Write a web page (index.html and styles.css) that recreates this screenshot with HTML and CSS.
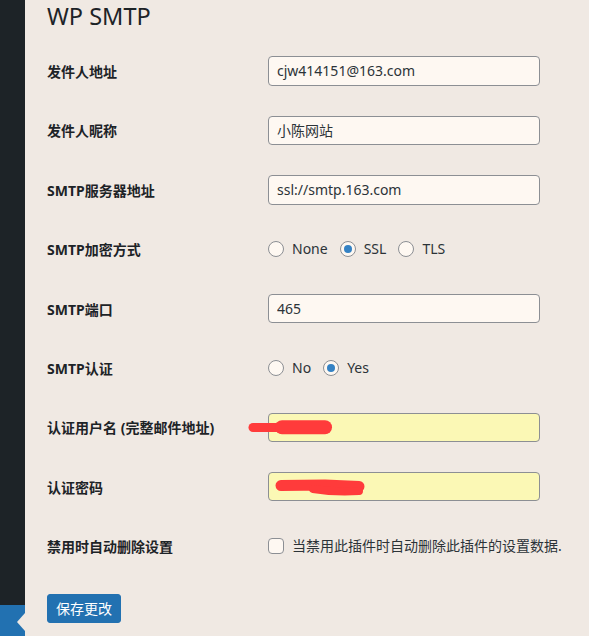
FILE: index.html
```html
<!DOCTYPE html>
<html lang="zh-CN">
<head>
  <meta charset="UTF-8">
  <title>WP SMTP</title>
  <link rel="stylesheet" href="styles.css">
</head>
<body>
  <div class="layout">
    <div class="sidebar">
      <div class="menu-current"></div>
    </div>

    <div class="wrap">
      <h1 class="page-title">WP SMTP</h1>

      <form class="form-table">
        <div class="row">
          <label class="th">发件人地址</label>
          <div class="td"><input class="regular-text" type="text" value="cjw414151@163.com"></div>
        </div>
        <div class="row">
          <label class="th">发件人昵称</label>
          <div class="td"><input class="regular-text" type="text" value="小陈网站"></div>
        </div>
        <div class="row">
          <label class="th">SMTP服务器地址</label>
          <div class="td"><input class="regular-text" type="text" value="ssl://smtp.163.com"></div>
        </div>
        <div class="row">
          <label class="th">SMTP加密方式</label>
          <div class="td choices">
            <label class="choice"><input type="radio" name="secure"> None</label>
            <label class="choice"><input type="radio" name="secure" checked> SSL</label>
            <label class="choice"><input type="radio" name="secure"> TLS</label>
          </div>
        </div>
        <div class="row">
          <label class="th">SMTP端口</label>
          <div class="td"><input class="regular-text" type="text" value="465"></div>
        </div>
        <div class="row">
          <label class="th">SMTP认证</label>
          <div class="td choices">
            <label class="choice"><input type="radio" name="auth"> No</label>
            <label class="choice"><input type="radio" name="auth" checked> Yes</label>
          </div>
        </div>
        <div class="row">
          <label class="th">认证用户名 (完整邮件地址)</label>
          <div class="td masked">
            <input class="regular-text autofill" type="text" value="">
            <svg class="scribble scribble-user" width="86" height="16" viewBox="0 0 86 16">
              <line x1="5" y1="7.5" x2="30" y2="7.5" stroke="#ff3b3b" stroke-width="9" stroke-linecap="round"/>
              <line x1="34" y1="7.3" x2="77" y2="7.3" stroke="#ff3b3b" stroke-width="14" stroke-linecap="round"/>
            </svg>
          </div>
        </div>
        <div class="row">
          <label class="th">认证密码</label>
          <div class="td masked">
            <input class="regular-text autofill" type="password" value="">
            <svg class="scribble scribble-pass" width="92" height="19" viewBox="0 0 92 19">
              <path d="M6 6.5 L50 6 L84 7.5" fill="none" stroke="#ff3b3b" stroke-width="11" stroke-linecap="round" stroke-linejoin="round"/>
              <path d="M38 10 Q60 13.5 84 12" fill="none" stroke="#ff3b3b" stroke-width="8" stroke-linecap="round"/>
            </svg>
          </div>
        </div>
        <div class="row">
          <label class="th">禁用时自动删除设置</label>
          <div class="td choices">
            <label class="choice"><input type="checkbox"> 当禁用此插件时自动删除此插件的设置数据.</label>
          </div>
        </div>

        <p class="submit">
          <button type="button" class="button-primary">保存更改</button>
        </p>
      </form>
    </div>
  </div>
</body>
</html>
```

FILE: styles.css
```css
body {
  margin: 0;
  background: #f0e9e3;
  color: #1d2327;
  font-family: "Noto Sans", "Noto Sans CJK SC", sans-serif;
  font-size: 14px;
}

.layout {
  display: flex;
  min-height: 636px;
}

.sidebar {
  width: 25px;
  background: #1d2327;
  display: flex;
  flex-direction: column;
  justify-content: flex-end;
}

.menu-current {
  height: 31px;
  background: #2271b1;
  position: relative;
}

/* current menu arrow */
.menu-current::after {
  content: "";
  position: absolute;
  right: 0;
  top: 8px;
  border: 9px solid transparent;
  border-right-color: #f0e9e3;
  border-left-width: 0;
  border-right-width: 8px;
}

.wrap {
  flex: 1;
  padding-left: 22px;
}

.page-title {
  font-size: 23.5px;
  font-weight: 400;
  line-height: normal;
  margin: 0;
  height: 41.3px;
}

.form-table {
  margin: 0;
}

.row {
  display: grid;
  grid-template-columns: 221px auto;
  align-items: center;
  height: 59.4px;
}

.th {
  font-weight: 700;
}

.td {
  display: flex;
  align-items: center;
}

.regular-text {
  box-sizing: border-box;
  width: 272px;
  height: 29.5px;
  margin: 0;
  padding: 0 8px;
  border: 1px solid #8c8f94;
  border-radius: 4px;
  background: #fef8f2;
  color: #2c3338;
  font: inherit;
}

.regular-text.autofill {
  background: #fbf8b5;
}

.masked {
  position: relative;
}

.scribble {
  position: absolute;
}

.scribble-user {
  left: -20px;
  top: 7px;
}

.scribble-pass {
  left: 7px;
  top: 7.5px;
}

.choices {
  gap: 12px;
  white-space: nowrap;
  color: #2c3338;
}

.choice {
  display: flex;
  align-items: center;
  gap: 8px;
  line-height: 16px;
}

.choice input {
  appearance: none;
  box-sizing: border-box;
  width: 16px;
  height: 16px;
  margin: 0;
  border: 1px solid #8c8f94;
  border-radius: 50%;
  background: #fef8f2;
  display: grid;
  place-items: center;
}

.choice input[type="checkbox"] {
  border-radius: 4px;
}

.choice input[type="radio"]:checked::before {
  content: "";
  width: 8px;
  height: 8px;
  border-radius: 50%;
  background: #3582c4;
}

.submit {
  margin: 18px 0 0;
}

.button-primary {
  height: 29.5px;
  padding: 0 8px;
  border: 1px solid #2271b1;
  border-radius: 3px;
  background: #2271b1;
  color: #fff;
  font: inherit;
  line-height: 1;
  cursor: pointer;
}
```
